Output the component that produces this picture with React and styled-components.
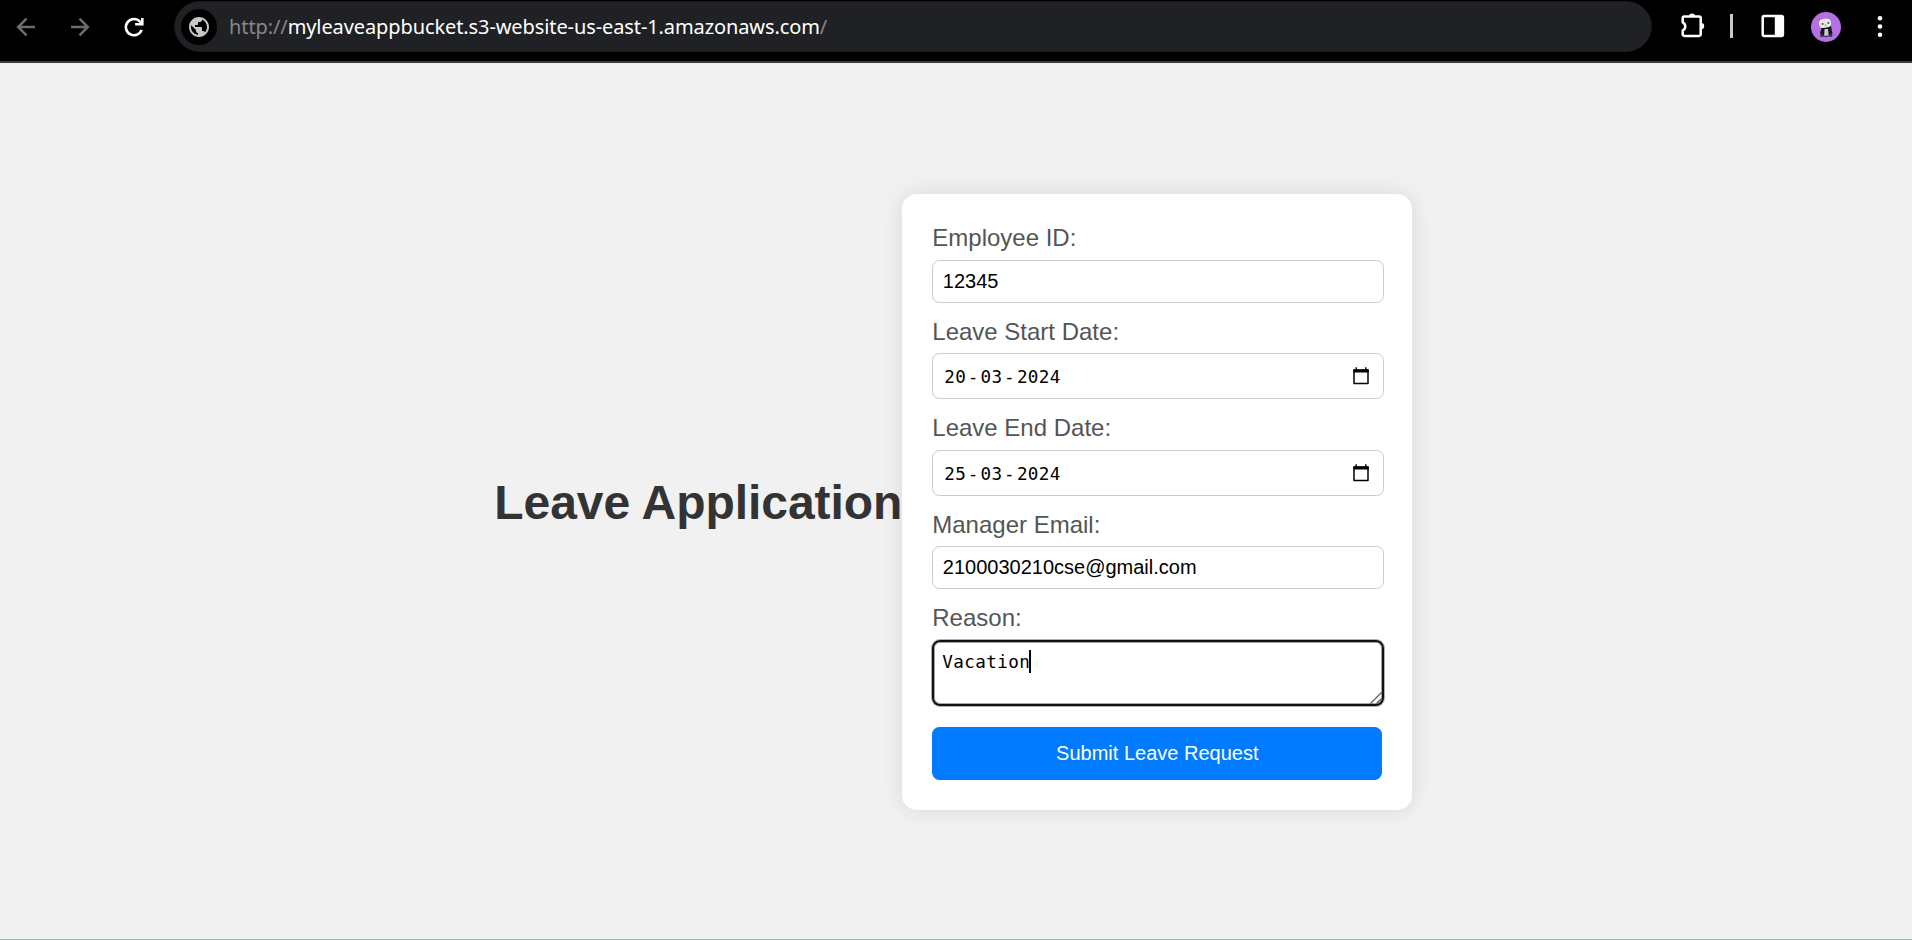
import React from 'react';
import styled, { createGlobalStyle } from 'styled-components';
import { MdPublic } from 'react-icons/md';

const GlobalStyle = createGlobalStyle`
  *, *::before, *::after { box-sizing: border-box; }
  body {
    margin: 0;
    background: #f1f1f1;
    font-family: 'Liberation Sans', Arial, sans-serif;
  }
`;

const Screen = styled.div`
  display: flex;
  flex-direction: column;
  height: 940px;
  border-bottom: 1px solid #a9b5b1;
  overflow: hidden;
`;

const Toolbar = styled.header`
  display: flex;
  flex: none;
  height: 63px;
  padding: 1px 17px 0 11px;
  background: #000;
  border-bottom: 2px solid #3c3a3b;
`;

const NavButtons = styled.nav`
  display: flex;
  align-items: center;
  gap: 24px;
  width: 163px;
  height: 51px;
`;

const Glyph = styled.svg`
  display: block;
  flex: none;
  width: 30px;
  height: 30px;
  fill: none;
  stroke: ${(p) => p.$color || '#fff'};
  stroke-width: ${(p) => p.$weight || 2.5};
`;

const AddressBar = styled.div`
  display: flex;
  align-items: center;
  width: 1478px;
  height: 51px;
  padding-left: 6px;
  border: 1px solid #18191c;
  border-radius: 26px;
  background: #202124;
`;

const SiteBadge = styled.span`
  display: flex;
  align-items: center;
  justify-content: center;
  width: 36px;
  height: 36px;
  margin-right: 12px;
  border-radius: 50%;
  background: #000;
  color: #c6c7c8;
`;

const Url = styled.span`
  font: 20px/28px 'Noto Sans', sans-serif;
  color: #fff;
  letter-spacing: -0.1px;
  white-space: nowrap;
`;

const UrlMuted = styled.span`
  color: #85878a;
`;

const ToolbarActions = styled.div`
  display: flex;
  align-items: center;
  height: 50px;
  margin-left: 25px;
`;

const Separator = styled.span`
  width: 3px;
  height: 24px;
  margin: 0 25px 0 23px;
  background: #c9c9cb;
`;

const Avatar = styled.svg`
  display: block;
  flex: none;
  width: 30px;
  height: 30px;
  margin: 1px 24px 0 23px;
`;

const Page = styled.main`
  display: flex;
  flex: 1;
  align-items: center;
  justify-content: center;
  padding: 1px 5.4px 0 0;
`;

const Title = styled.h1`
  margin: 2px 0 0;
  font-size: 48px;
  line-height: 55px;
  letter-spacing: -0.06px;
  color: #333;
  white-space: nowrap;
`;

const Card = styled.form`
  display: flex;
  flex: none;
  flex-direction: column;
  width: 510px;
  height: 616px;
  padding: 30px;
  border-radius: 15px;
  background: #fff;
  box-shadow: 0 0 22px rgba(0, 0, 0, 0.1);
`;

const Label = styled.label`
  height: 28px;
  margin-bottom: ${(p) => p.$gap || 8}px;
  font-size: 24px;
  line-height: 28px;
  color: #555;
`;

const TextInput = styled.input`
  width: 452px;
  height: 43px;
  margin: 0 0 15px;
  padding: 1px 9.5px 0;
  border: 1px solid #ccc;
  border-radius: 7.5px;
  background: #fff;
  font: 20px 'Liberation Sans', Arial, sans-serif;
  color: #000;
  outline: none;
`;

const DateBox = styled.div`
  display: flex;
  align-items: center;
  justify-content: space-between;
  width: 452px;
  height: 46px;
  margin-bottom: 15px;
  padding: 0 14px 0 11px;
  border: 1px solid #ccc;
  border-radius: 7.5px;
`;

const DateText = styled.span`
  display: flex;
  padding-top: 2px;
  font: 17.6px/24px 'DejaVu Sans Mono', monospace;
  letter-spacing: 0.4px;
  color: #000;
`;

const Dash = styled.span`
  width: 14.3px;
  padding-left: 1.5px;
`;

const CalendarIcon = styled.svg`
  display: block;
  width: 16px;
  height: 18px;
`;

const ReasonBox = styled.div`
  display: flex;
  position: relative;
  width: 452px;
  height: 66px;
  margin-bottom: 21px;
  padding: 8px 8px;
  border: 2px solid #101010;
  border-radius: 8px;
  box-shadow: 0 0 0 1px #b0b0b0, inset 0 0 0 1px #a5a5a5;
  font: 17.6px/25px 'DejaVu Sans Mono', monospace;
  letter-spacing: 0.4px;
  color: #000;
`;

const Caret = styled.span`
  width: 2px;
  height: 23px;
  margin-left: -1px;
  background: #000;
`;

const ResizeHandle = styled.svg`
  position: absolute;
  right: 0;
  bottom: 0;
  width: 12px;
  height: 12px;
`;

const SubmitButton = styled.button`
  width: 450px;
  height: 53px;
  padding: 1px 0 0;
  border: 0;
  border-radius: 7.5px;
  background: #007bff;
  color: #fff;
  font: 20px 'Liberation Sans', Arial, sans-serif;
`;

function DateField({ id, value }) {
  const [day, month, year] = value.split('-');
  return (
    <DateBox id={id}>
      <DateText>
        <span>{day}</span>
        <Dash>-</Dash>
        <span>{month}</span>
        <Dash>-</Dash>
        <span>{year}</span>
      </DateText>
      <CalendarIcon viewBox="0 0 16 18">
        <path d="M1 3.2h14v13.3H1z" fill="none" stroke="#000" strokeWidth="1.5" strokeLinejoin="round" />
        <path d="M.3 2.3h15.4v3.2H.3zM2.5.3h1.4v2.4H2.5zM12.1.3h1.4v2.4h-1.4z" fill="#000" />
      </CalendarIcon>
    </DateBox>
  );
}

export default function App() {
  return (
    <Screen>
      <GlobalStyle />
      <Toolbar>
        <NavButtons>
          <Glyph viewBox="0 0 30 30" $color="#6c6c6c">
            <path d="M24 15H7.5M15.5 6.7 7.2 15l8.3 8.3" />
          </Glyph>
          <Glyph viewBox="0 0 30 30" $color="#6c6c6c">
            <path d="M6 15h16.5M14.5 6.7l8.3 8.3-8.3 8.3" />
          </Glyph>
          <Glyph viewBox="0 0 30 30" $weight={2.6}>
            <path d="M22.6 17.9A8.1 8.1 0 1 1 21 9.7L23 11.8M23.3 6v6.3h-7.2" />
          </Glyph>
        </NavButtons>
        <AddressBar>
          <SiteBadge>
            <MdPublic size={24} />
          </SiteBadge>
          <Url>
            <UrlMuted>http://</UrlMuted>
            myleaveappbucket.s3-website-us-east-1.amazonaws.com
            <UrlMuted>/</UrlMuted>
          </Url>
        </AddressBar>
        <ToolbarActions>
          <Glyph viewBox="0 0 30 30">
            <path
              d="M7.2 5.6h15a1.5 1.5 0 0 1 1.5 1.5v16.3a1.5 1.5 0 0 1-1.5 1.5h-15a1.5 1.5 0 0 1-1.5-1.5v-4a4.4 4.4 0 0 0 0-8V7.1a1.5 1.5 0 0 1 1.5-1.5z"
              strokeLinejoin="round"
            />
            <path d="M12 5.6a3.1 3.1 0 0 1 6.2 0zM24 11.9a3.2 3.2 0 0 1 0 6.4z" fill="#fff" stroke="none" />
          </Glyph>
          <Separator />
          <Glyph viewBox="0 0 30 30">
            <rect x="4.7" y="5.1" width="20.2" height="20" rx="1.5" />
            <path d="M16.8 5h8v20.3h-8z" fill="#fff" stroke="none" />
          </Glyph>
          <Avatar viewBox="0 0 30 30">
            <circle cx="15" cy="15" r="15" fill="#b570e3" />
            <path d="M10.5 15.5l9.6-1.6 1.2 8.4H9.4z" fill="#17171b" />
            <ellipse cx="15.3" cy="20.5" rx="6" ry="4.2" fill="#17171b" />
            <path d="M13.6 17h3.4l.7 6.8h-4.6z" fill="#c9c9ce" />
            <circle cx="9.4" cy="8.2" r="1.3" fill="#77777e" />
            <circle cx="17.4" cy="6.4" r="1.2" fill="#77777e" />
            <rect x="8" y="6.8" width="12" height="8.8" rx="3.8" fill="#e8e8ea" transform="rotate(-10 14 11)" />
            <circle cx="11.6" cy="11.9" r=".9" fill="#303036" />
            <circle cx="17.4" cy="10.9" r=".9" fill="#303036" />
            <circle cx="14.7" cy="13" r=".6" fill="#303036" />
            <circle cx="10.8" cy="23.5" r="1.6" fill="#35353b" />
            <circle cx="19.8" cy="23.3" r="1.6" fill="#35353b" />
          </Avatar>
          <Glyph viewBox="0 0 30 30">
            <g fill="#fff" stroke="none">
              <circle cx="15" cy="7.2" r="2.3" />
              <circle cx="15" cy="15.5" r="2.3" />
              <circle cx="15" cy="23.8" r="2.3" />
            </g>
          </Glyph>
        </ToolbarActions>
      </Toolbar>
      <Page>
        <Title>Leave Application</Title>
        <Card onSubmit={(e) => e.preventDefault()}>
          <Label htmlFor="employee">Employee ID:</Label>
          <TextInput id="employee" defaultValue="12345" />
          <Label $gap={7}>Leave Start Date:</Label>
          <DateField id="start" value="20-03-2024" />
          <Label>Leave End Date:</Label>
          <DateField id="end" value="25-03-2024" />
          <Label htmlFor="manager" $gap={7}>Manager Email:</Label>
          <TextInput id="manager" defaultValue="2100030210cse@gmail.com" />
          <Label>Reason:</Label>
          <ReasonBox>
            Vacation
            <Caret />
            <ResizeHandle viewBox="0 0 12 12">
              <path d="M.5 11.5l11-11M6.5 11.5l5-5" fill="none" stroke="#555" strokeWidth="1.1" />
            </ResizeHandle>
          </ReasonBox>
          <SubmitButton type="submit">Submit Leave Request</SubmitButton>
        </Card>
      </Page>
    </Screen>
  );
}
